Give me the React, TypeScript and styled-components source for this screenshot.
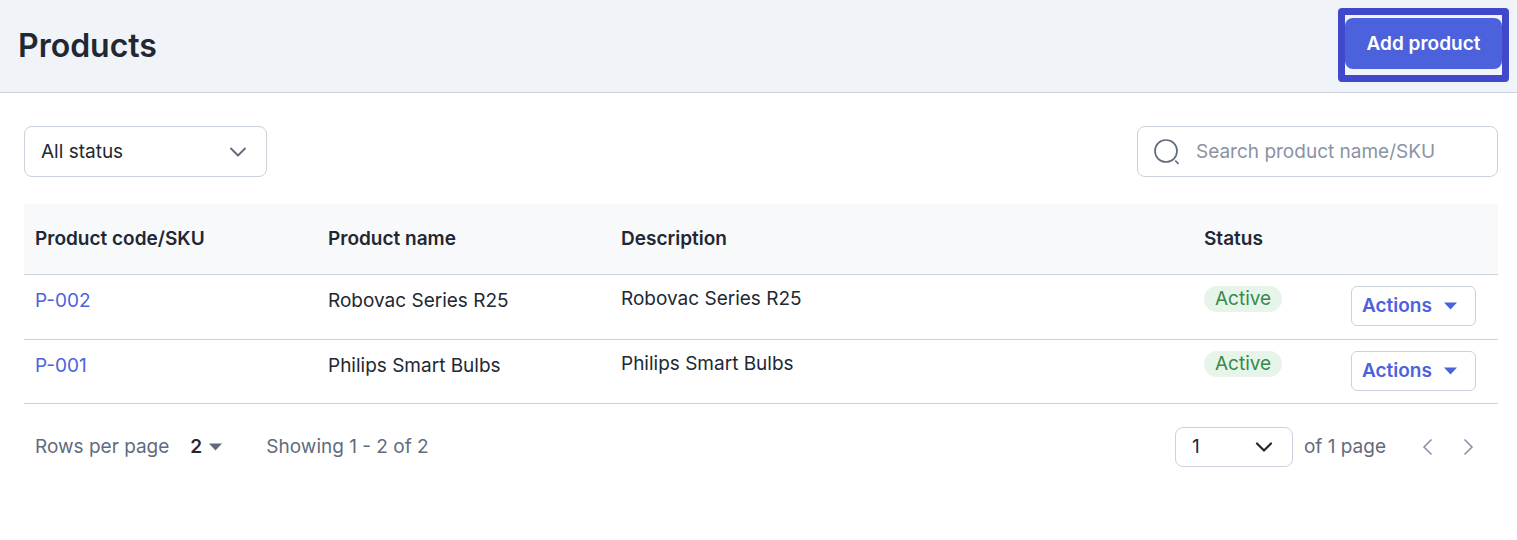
import React from "react";
import styled, { createGlobalStyle } from "styled-components";

const GlobalStyle = createGlobalStyle`
  *, *::before, *::after { box-sizing: border-box; }
  body {
    margin: 0;
    background: #ffffff;
    color: #212833;
    font-family: Inter, "Liberation Sans", sans-serif;
    font-size: 19px;
    line-height: 24px;
  }
  button, input, select { font: inherit; color: inherit; margin: 0; }
  button { cursor: pointer; }
`;

const Header = styled.header`
  display: flex;
  align-items: flex-start;
  justify-content: space-between;
  padding: 8px 8px 10px 18px;
  background: #f0f3f8;
  border-bottom: 1px solid #cbd2dc;
`;

const Title = styled.h1`
  margin: 0;
  padding-top: 18px;
  font-size: 32px;
  line-height: 40px;
  font-weight: 600;
`;

const Highlight = styled.div`
  display: flex;
  height: 74px;
  padding: 3px 0 6px;
  border: 7px solid #4048cb;
  border-radius: 4px;
`;

const PrimaryButton = styled.button`
  width: 157px;
  padding: 0;
  border: 0;
  border-radius: 8px;
  background: #4c62dd;
  color: #ffffff;
  font-weight: 600;
`;

const Main = styled.main`
  padding: 33px 19px 24px 24px;
`;

const Toolbar = styled.div`
  display: flex;
  justify-content: space-between;
  margin-bottom: 27px;
`;

const SelectBox = styled.div<{ $width: number; $height: number; $icon: string; $inset: number }>`
  display: grid;
  align-items: center;
  width: ${(p) => p.$width}px;
  height: ${(p) => p.$height}px;
  color: ${(p) => p.$icon};

  > * { grid-area: 1 / 1; }

  > select {
    width: 100%;
    height: 100%;
    padding: 0 48px 0 16px;
    appearance: none;
    border: 1px solid #cbd2dc;
    border-radius: 8px;
    background: #ffffff;
    color: #212833;
  }

  > svg {
    justify-self: end;
    margin-right: ${(p) => p.$inset}px;
    pointer-events: none;
  }
`;

const SearchBox = styled.label`
  display: flex;
  align-items: center;
  gap: 16px;
  width: 361px;
  height: 51px;
  padding: 0 16px;
  border: 1px solid #cbd2dc;
  border-radius: 8px;
  color: #626b7c;
`;

const SearchInput = styled.input`
  flex: 1;
  min-width: 0;
  padding: 0;
  border: 0;
  outline: 0;
  background: transparent;
  &::placeholder { color: #8a93a3; opacity: 1; }
`;

const Table = styled.table`
  width: 100%;
  table-layout: fixed;
  border-collapse: separate;
  border-spacing: 0;
`;

const Column = styled.col<{ $width?: number }>`
  width: ${(p) => (p.$width ? `${p.$width}px` : "auto")};
`;

const HeadCell = styled.th`
  height: 71px;
  padding: 0 11px;
  border-bottom: 1px solid #cbd2dc;
  background: #f8f9fb;
  text-align: left;
  font-weight: 600;
`;

const Cell = styled.td<{ $top: number }>`
  height: 65px;
  padding: ${(p) => p.$top}px 11px 0;
  border-bottom: 1px solid #cbd2dc;
  vertical-align: top;

  tr:last-child > & { height: 64px; }
`;

const CodeLink = styled.a`
  color: #4c62dd;
  text-decoration: none;
`;

const Badge = styled.span`
  display: block;
  width: fit-content;
  padding: 1px 11px;
  border-radius: 13px;
  background: #e7f4ea;
  color: #38894a;
`;

const ActionsButton = styled.button`
  display: flex;
  align-items: center;
  gap: 11px;
  width: 125px;
  height: 40px;
  padding: 0 10px;
  border: 1px solid #cbd2dc;
  border-radius: 6px;
  background: #ffffff;
  color: #4c62dd;
  font-weight: 600;
`;

const Footer = styled.footer`
  display: flex;
  align-items: center;
  justify-content: space-between;
  padding: 23px 24px 0 11px;
  color: #626b7c;
`;

const Group = styled.div<{ $gap: number }>`
  display: flex;
  align-items: center;
  gap: ${(p) => p.$gap}px;
`;

const RowsLabel = styled.label`
  display: flex;
  align-items: center;
  gap: 21px;
`;

const RowsSelect = styled.span`
  display: grid;
  align-items: center;
  width: 33px;

  > * { grid-area: 1 / 1; }

  > select {
    width: 100%;
    padding: 0;
    appearance: none;
    border: 0;
    background: transparent;
    color: #212833;
    font-weight: 600;
  }

  > svg { justify-self: end; pointer-events: none; }
`;

const PageButton = styled.button`
  display: flex;
  padding: 0;
  border: 0;
  background: transparent;
  color: #8a93a8;
`;

const Caret = () => (
  <svg width="15" height="8" viewBox="0 0 15 8" fill="currentColor" aria-hidden="true">
    <path d="M1 .5h13L7.500 7.500z" />
  </svg>
);

const Chevron = ({ weight }: { weight: number }) => (
  <svg width="18" height="12" viewBox="0 0 18 12" fill="none" stroke="currentColor" strokeWidth={weight} strokeLinecap="round" strokeLinejoin="round" aria-hidden="true">
    <path d="M2 2.500l7 7 7-7" />
  </svg>
);

const SearchIcon = () => (
  <svg width="26" height="26" viewBox="0 0 26 26" fill="none" stroke="currentColor" strokeWidth="1.700" aria-hidden="true">
    <circle cx="12" cy="12" r="11" />
    <path d="M21.200 21.500l3.300 3.300" />
  </svg>
);

const Arrow = ({ path }: { path: string }) => (
  <svg width="11" height="18" viewBox="0 0 11 18" fill="none" stroke="currentColor" strokeWidth="1.600" aria-hidden="true">
    <path d={path} />
  </svg>
);

const products = [
  { code: "P-002", name: "Robovac Series R25", description: "Robovac Series R25", status: "Active" },
  { code: "P-001", name: "Philips Smart Bulbs", description: "Philips Smart Bulbs", status: "Active" },
];

export default function App() {
  return (
    <>
      <GlobalStyle />
      <Header>
        <Title>Products</Title>
        <Highlight>
          <PrimaryButton type="button">Add product</PrimaryButton>
        </Highlight>
      </Header>
      <Main>
        <Toolbar>
          <SelectBox $width={243} $height={51} $icon="#626b7c" $inset={20}>
            <select aria-label="Status filter">
              <option>All status</option>
            </select>
            <Chevron weight={1.9} />
          </SelectBox>
          <SearchBox>
            <SearchIcon />
            <SearchInput type="text" aria-label="Search products" placeholder="Search product name/SKU" />
          </SearchBox>
        </Toolbar>
        <Table>
          <colgroup>
            <Column $width={293} />
            <Column $width={293} />
            <Column />
            <Column $width={147} />
            <Column $width={158} />
          </colgroup>
          <thead>
            <tr>
              <HeadCell>Product code/SKU</HeadCell>
              <HeadCell>Product name</HeadCell>
              <HeadCell>Description</HeadCell>
              <HeadCell>Status</HeadCell>
              <HeadCell aria-label="Actions" />
            </tr>
          </thead>
          <tbody>
            {products.map((product) => (
              <tr key={product.code}>
                <Cell $top={14}>
                  <CodeLink href="#">{product.code}</CodeLink>
                </Cell>
                <Cell $top={14}>{product.name}</Cell>
                <Cell $top={12}>{product.description}</Cell>
                <Cell $top={11}>
                  <Badge>{product.status}</Badge>
                </Cell>
                <Cell $top={11}>
                  <ActionsButton type="button">
                    Actions
                    <Caret />
                  </ActionsButton>
                </Cell>
              </tr>
            ))}
          </tbody>
        </Table>
        <Footer>
          <Group $gap={43}>
            <RowsLabel>
              Rows per page
              <RowsSelect>
                <select>
                  <option>2</option>
                </select>
                <Caret />
              </RowsSelect>
            </RowsLabel>
            <span>Showing 1 - 2 of 2</span>
          </Group>
          <Group $gap={36}>
            <Group $gap={11}>
              <SelectBox $width={118} $height={40} $icon="#212833" $inset={20}>
                <select aria-label="Page">
                  <option>1</option>
                </select>
                <Chevron weight={2.2} />
              </SelectBox>
              <span>of 1 page</span>
            </Group>
            <Group $gap={30}>
              <PageButton type="button" aria-label="Previous page">
                <Arrow path="M9.500 1.500L2 9l7.500 7.500" />
              </PageButton>
              <PageButton type="button" aria-label="Next page">
                <Arrow path="M1.500 1.500L9 9l-7.500 7.500" />
              </PageButton>
            </Group>
          </Group>
        </Footer>
      </Main>
    </>
  );
}
